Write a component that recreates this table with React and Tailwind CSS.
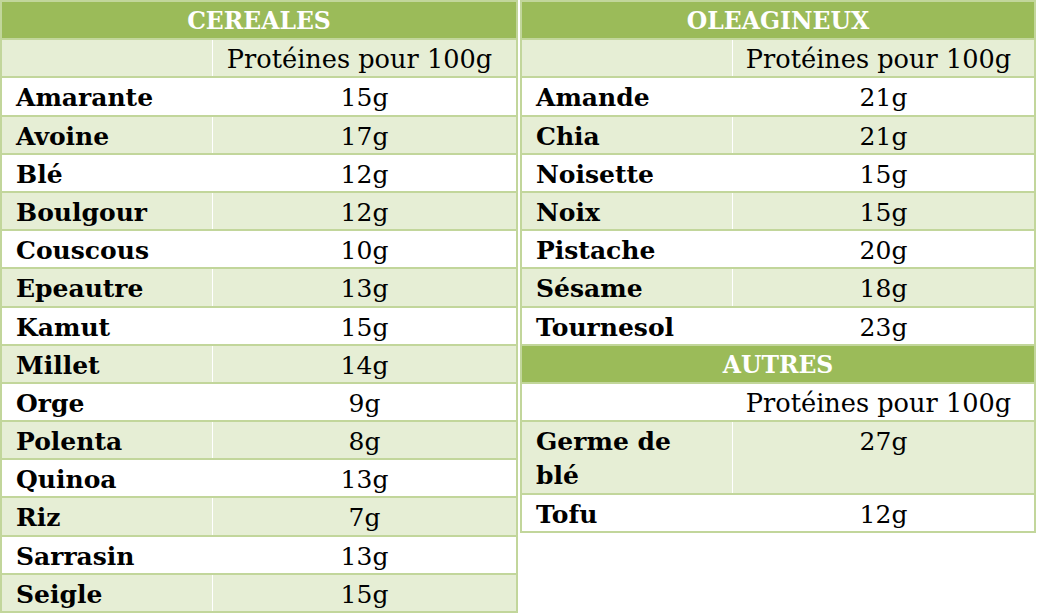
import React from "react";

const cereales = [
  ["Amarante", "15g"],
  ["Avoine", "17g"],
  ["Blé", "12g"],
  ["Boulgour", "12g"],
  ["Couscous", "10g"],
  ["Epeautre", "13g"],
  ["Kamut", "15g"],
  ["Millet", "14g"],
  ["Orge", "9g"],
  ["Polenta", "8g"],
  ["Quinoa", "13g"],
  ["Riz", "7g"],
  ["Sarrasin", "13g"],
  ["Seigle", "15g"],
];

const oleagineux = [
  ["Amande", "21g"],
  ["Chia", "21g"],
  ["Noisette", "15g"],
  ["Noix", "15g"],
  ["Pistache", "20g"],
  ["Sésame", "18g"],
  ["Tournesol", "23g"],
];

const autres = [
  ["Germe de blé", "27g", true],
  ["Tofu", "12g"],
];

// Section title row (green band)
const TitleRow = ({ children }) => (
  <div className="h-[36.2px] bg-[#9bbb59] pt-[3px] text-center text-[23.5px] font-bold leading-[33.5px] text-white">
    {children}
  </div>
);

// "Protéines pour 100g" row
const SubRow = ({ shaded }) => (
  <div className={`flex h-[36.2px] ${shaded ? "bg-[#e6eed5]" : "bg-white"}`}>
    <div className="w-[211px] border-r border-white" />
    <div className="flex-1 pt-[3px] pr-[10px] text-center text-[25.6px] leading-[33.5px]">
      Protéines pour 100g
    </div>
  </div>
);

// Data row: bold name + centered value
const DataRow = ({ name, value, shaded, tall }) => (
  <div
    className={`flex ${tall ? "h-[71px]" : "h-[36.2px]"} ${
      shaded ? "bg-[#e6eed5]" : "bg-white"
    }`}
  >
    <div className="w-[211px] border-r border-white pl-[14px] pt-[3px] font-bold leading-[33.5px]">
      <div className="w-[148px]">{name}</div>
    </div>
    <div className="flex-1 pt-[3px] text-center leading-[33.5px]">{value}</div>
  </div>
);

const Sep = () => <div className="h-[2px] bg-[#c2d69b]" />;

export default function App() {
  return (
    <div
      className="flex h-[615px] w-[1038px] items-start bg-white text-[25px] text-black"
      style={{ fontFamily: '"DejaVu Serif", serif' }}
    >
      {/* CEREALES */}
      <div className="w-[518px] border-2 border-[#c2d69b]">
        <TitleRow>CEREALES</TitleRow>
        <Sep />
        <SubRow shaded />
        {cereales.map(([n, v], i) => (
          <React.Fragment key={n}>
            <Sep />
            <DataRow name={n} value={v} shaded={i % 2 === 1} />
          </React.Fragment>
        ))}
      </div>

      {/* OLEAGINEUX + AUTRES */}
      <div className="ml-[2px] w-[516px] border-2 border-[#c2d69b]">
        <TitleRow>OLEAGINEUX</TitleRow>
        <Sep />
        <SubRow shaded />
        {oleagineux.map(([n, v], i) => (
          <React.Fragment key={n}>
            <Sep />
            <DataRow name={n} value={v} shaded={i % 2 === 1} />
          </React.Fragment>
        ))}
        <Sep />
        <TitleRow>AUTRES</TitleRow>
        <Sep />
        <SubRow />
        {autres.map(([n, v, tall], i) => (
          <React.Fragment key={n}>
            <Sep />
            <DataRow name={n} value={v} tall={tall} shaded={i % 2 === 0} />
          </React.Fragment>
        ))}
      </div>
    </div>
  );
}
